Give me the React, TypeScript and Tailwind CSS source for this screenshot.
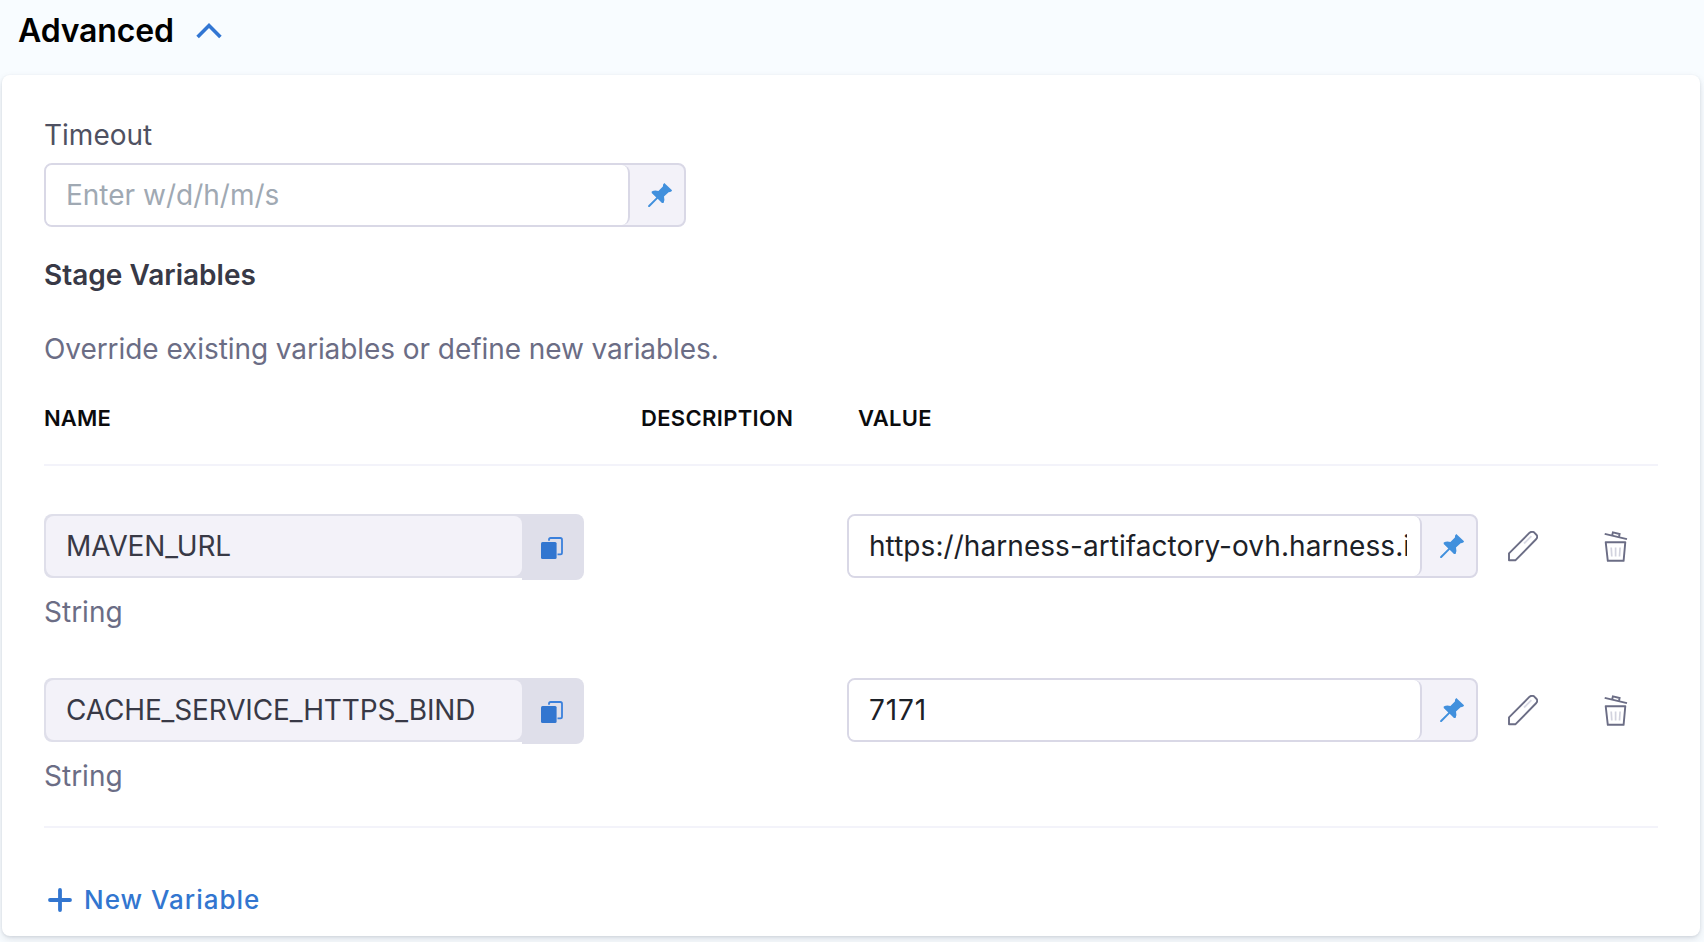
import type { ReactNode } from "react";

function ChevronUp() {
  return (
    <svg className="block" width="26" height="16" viewBox="0 0 26 16" fill="none" stroke="#3276d3" strokeWidth="3.6">
      <path d="M1.6 14 L13 2.6 L24.4 14" strokeLinejoin="miter" />
    </svg>
  );
}

function Pin() {
  return (
    <svg className="block" width="24" height="24" viewBox="0 0 24 24" fill="#4190dd">
      <path d="M16.3 0 L24 7.3 Q24 9 20.6 9.2 L16 13.6 Q17 17 15.6 20 L14 20 L9.7 15.8 L1.6 23.9 L0.2 23.9 L0.2 22.5 L8.3 14.4 L3.7 9.9 L3.7 8.5 Q6.8 7 10.4 8 L14.9 3.6 Q14.6 1 16.3 0 Z" />
    </svg>
  );
}

function Copy() {
  return (
    <svg className="block" width="22" height="22" viewBox="0 0 22 22">
      <path d="M8 3.7 V2.6 Q8 1 9.6 1 H19.3 Q21 1 21 2.7 V15.7 Q21 17.3 19.4 17.3 H16.5" fill="none" stroke="#3a80dc" strokeWidth="1.8" />
      <rect x="0" y="5" width="15.6" height="17" rx="1.5" fill="#3276d0" />
    </svg>
  );
}

function Pencil() {
  return (
    <svg className="block" width="30" height="31" viewBox="0 0 30 31" fill="none" stroke="#6b6d85" strokeWidth="1.9">
      <path d="M1 22.3 L21.6 1.7 Q23.6 0 25.8 1.2 L28.6 4 Q30 6 28.3 8 L7.6 29.2 H1 Z" strokeLinejoin="round" />
      <path d="M16 12.5 L23.4 5.2" stroke="#d9dae5" strokeWidth="1.8" />
    </svg>
  );
}

function Trash() {
  return (
    <svg className="block" width="24" height="31" viewBox="0 0 24 31" fill="none" stroke="#6b6d85" strokeWidth="1.9">
      <path d="M0.7 2.9 L23 8.2" />
      <path d="M8.2 4.2 L8.9 1.4 L15.6 3 L15 5.8" />
      <path d="M1.7 11.2 H21.3 L19.6 29.8 H3.8 Z" strokeLinejoin="round" />
      <path d="M7.2 16.5 L7.8 25.5 M11.6 16.5 V25.5 M16.1 16.5 L15.5 25.5" stroke="#d2d3de" strokeWidth="1.7" />
    </svg>
  );
}

function PinnedInput({ width, children }: { width: string; children: ReactNode }) {
  return (
    <div className={`flex h-16 shrink-0 overflow-hidden rounded-lg border-2 border-[#d9d8e6] bg-[#f3f2f9] ${width}`}>
      <div className="flex min-w-0 flex-1 items-center rounded-r-lg border-r-2 border-[#d9d8e6] bg-white pr-[13px] pl-5">
        <div className="min-w-0 flex-1 overflow-hidden whitespace-nowrap">{children}</div>
      </div>
      <button className="flex w-[54px] items-center justify-center pl-1.5">
        <Pin />
      </button>
    </div>
  );
}

function VariableRow({ name, value, valueSpacing }: { name: string; value: string; valueSpacing: string }) {
  return (
    <div className="flex h-[164px] items-start">
      <div className="w-[803px]">
        <div className="flex h-[66px] w-[540px]">
          <div className="h-16 w-[478px] rounded-l-lg bg-[#dfdfea] py-0.5 pl-0.5">
            <div className="flex h-[60px] items-center rounded-lg bg-[#f3f2f9] pl-5 text-[28px] tracking-[-0.15px] text-[#383946]">
              {name}
            </div>
          </div>
          <button className="flex w-[62px] items-start rounded-r-lg bg-[#dfdfea] pt-[23px] pl-[19px]">
            <Copy />
          </button>
        </div>
        <p className="mt-[15px] text-[28px] leading-[34px] text-[#6b6d85]">String</p>
      </div>
      <PinnedInput width="w-[631px]">
        <span className={`text-[28px] text-[#1c2127] ${valueSpacing}`}>{value}</span>
      </PinnedInput>
      <button className="ml-[30px] pt-[17px]">
        <Pencil />
      </button>
      <button className="ml-[66px] pt-[17px]">
        <Trash />
      </button>
    </div>
  );
}

export default function App() {
  return (
    <main className="h-[942px] w-[1704px] overflow-hidden bg-[#f8fcff] pl-0.5 font-['Inter',sans-serif]">
      <header className="flex h-[75px] items-start pt-3 pl-4">
        <h2 className="text-[32px] leading-[38px] font-semibold tracking-[-0.15px] text-black">Advanced</h2>
        <div className="mt-[11px] ml-[22px]">
          <ChevronUp />
        </div>
      </header>
      <section className="h-[861px] w-[1698px] rounded-lg bg-white pt-[43px] pl-[42px] shadow-[0_1px_3px_rgba(40,60,80,0.12),0_4px_8px_rgba(96,97,112,0.14)]">
        <p className="text-[28px] leading-[34px] text-[#4f5162]">Timeout</p>
        <div className="mt-[11px]">
          <PinnedInput width="w-[642px]">
            <span className="text-[28px] text-[#a0a9b3]">Enter w/d/h/m/s</span>
          </PinnedInput>
        </div>
        <h3 className="mt-[31px] text-[28px] leading-[34px] font-semibold text-[#383946]">Stage Variables</h3>
        <p className="mt-10 text-[28px] leading-[34px] tracking-[-0.07px] text-[#6b6d85]">Override existing variables or define new variables.</p>
        <div className="mt-[38px] flex h-[62px] w-[1614px] border-b-2 border-[#f3f3fa] text-[22px] leading-7 font-semibold tracking-[0.33px] text-[#0b0b0d]">
          <span className="w-[597px] tracking-[0.15px]">NAME</span>
          <span className="w-[217px]">DESCRIPTION</span>
          <span>VALUE</span>
        </div>
        <div className="h-[362px] w-[1614px] border-b-2 border-[#f3f3fa] pt-12">
          <VariableRow name="MAVEN_URL" value="https://harness-artifactory-ovh.harness.io" valueSpacing="tracking-[0.06px]" />
          <VariableRow name="CACHE_SERVICE_HTTPS_BIND" value="7171" valueSpacing="tracking-[0.9px]" />
        </div>
        <button className="mt-[56px] flex items-center gap-3 pl-1 text-[26px] leading-8 font-medium tracking-[1px] text-[#3276d0]">
          <svg width="24" height="24" viewBox="0 0 24 24" fill="none" stroke="#3276d0" strokeWidth="3.8" strokeLinecap="round">
            <path d="M12 2 V22 M2 12 H22" />
          </svg>
          New Variable
        </button>
      </section>
    </main>
  );
}
